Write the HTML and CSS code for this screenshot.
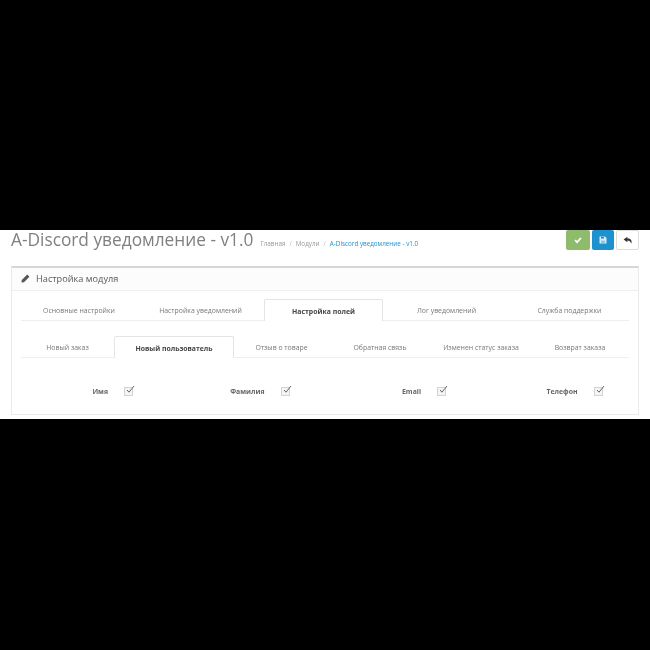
FILE: index.html
```html
<!DOCTYPE html>
<html lang="en">
<head>
    <meta charset="UTF-8">
    <title>A-Discord</title>
    <link rel="stylesheet" href="styles.css">
</head>
<body>
    <div class="band-top"></div>

    <div id="content">
        <!-- Page header -->
        <div class="page-header">
            <h1>A-Discord уведомление - v1.0</h1>
            <ul class="breadcrumb">
                <li>Главная</li>
                <li class="sep">/</li>
                <li>Модули</li>
                <li class="sep">/</li>
                <li class="current">A-Discord уведомление - v1.0</li>
            </ul>
            <div class="buttons">
                <a class="btn btn-success">
                    <svg width="8" height="8" viewBox="0 0 8 8"><path d="M1 4.2 3.1 6.2 7 2" fill="none" stroke="#fff" stroke-width="1.7"/></svg>
                </a>
                <a class="btn btn-primary">
                    <svg width="8" height="8" viewBox="0 0 8 8"><path d="M0.5 0.5H6L7.5 2V7.5H0.5Z" fill="#dcecf7"/><path d="M2 0.8H5V2.6H2Z" fill="#1e91cf"/><path d="M2 4.6H6V7H2Z" fill="#8fc6e6"/></svg>
                </a>
                <a class="btn btn-default">
                    <svg width="10" height="9" viewBox="0 0 10 9"><path d="M4.4 0.8 0.6 3.6 4.4 6.2V4.5C6.4 4.5 7.6 5.2 8.2 7.8 9.4 4.6 7.8 2.6 4.4 2.6Z" fill="#333"/></svg>
                </a>
            </div>
        </div>

        <!-- Settings panel -->
        <div class="panel">
            <div class="panel-heading">
                <svg class="pencil" width="9" height="9" viewBox="0 0 9 9"><path d="M6.2 0.6 8.4 2.8 3 8.2 0.4 8.6 0.8 6Z" fill="#555"/></svg>
                <h3>Настройка модуля</h3>
            </div>
            <div class="panel-body">
                <ul class="tabs tabs-main">
                    <li>Основные настройки</li>
                    <li>Настройка уведомлений</li>
                    <li class="active">Настройка полей</li>
                    <li>Лог уведомлений</li>
                    <li>Служба поддержки</li>
                </ul>
                <ul class="tabs tabs-sub">
                    <li>Новый заказ</li>
                    <li class="active">Новый пользователь</li>
                    <li>Отзыв о товаре</li>
                    <li>Обратная связь</li>
                    <li>Изменен статус заказа</li>
                    <li>Возврат заказа</li>
                </ul>
                <div class="fields">
                    <div class="field"><label>Имя</label><span class="check"><svg width="10" height="10" viewBox="0 0 10 10"><path d="M2 5 4 7.2 9 1" fill="none" stroke="#666" stroke-width="1"/></svg></span></div>
                    <div class="field"><label>Фамилия</label><span class="check"><svg width="10" height="10" viewBox="0 0 10 10"><path d="M2 5 4 7.2 9 1" fill="none" stroke="#666" stroke-width="1"/></svg></span></div>
                    <div class="field"><label>Email</label><span class="check"><svg width="10" height="10" viewBox="0 0 10 10"><path d="M2 5 4 7.2 9 1" fill="none" stroke="#666" stroke-width="1"/></svg></span></div>
                    <div class="field"><label>Телефон</label><span class="check"><svg width="10" height="10" viewBox="0 0 10 10"><path d="M2 5 4 7.2 9 1" fill="none" stroke="#666" stroke-width="1"/></svg></span></div>
                </div>
            </div>
        </div>
    </div>

    <div class="band-bottom"></div>
</body>
</html>
```

FILE: styles.css
```css
/* General Styles */
html, body {
    margin: 0;
    padding: 0;
    height: 650px;
    overflow: hidden;
    background-color: #000;
    font-family: "Open Sans", sans-serif;
}

.band-top {
    height: 230px;
}

.band-bottom {
    height: 231px;
}

#content {
    height: 189px;
    background-color: #fff;
    padding: 0 11px;
    box-sizing: border-box;
}

/* Page header */
.page-header {
    display: flex;
    align-items: flex-start;
    height: 36px;
    filter: blur(0.35px);
}

.page-header h1 {
    margin: 0 7px 0 0;
    font-size: 17.3px;
    font-weight: 400;
    line-height: 20px;
    color: #808080;
}

.breadcrumb {
    display: flex;
    gap: 4px;
    margin: 9px 0 0 0;
    padding: 0;
    list-style: none;
    font-size: 6.3px;
    line-height: 9px;
    color: #999;
}

.breadcrumb .sep {
    color: #bbb;
}

.breadcrumb .current {
    color: #1e91cf;
}

.buttons {
    display: flex;
    gap: 2px;
    margin-left: auto;
}

.btn {
    display: flex;
    align-items: center;
    justify-content: center;
    width: 22px;
    height: 20px;
    border-radius: 2px;
    box-sizing: border-box;
}

.btn-success {
    width: 24px;
    background-color: #8fbb6c;
}

.btn-primary {
    background-color: #1e91cf;
}

.btn-default {
    width: 23px;
    background-color: #fff;
    border: 1px solid #ddd;
}

/* Panel */
.panel {
    height: 149px;
    border: 1px solid #eaeaea;
    border-top: 2px solid #d6d6d6;
    border-radius: 1px;
    box-sizing: border-box;
    filter: blur(0.35px);
}

.panel-heading {
    display: flex;
    align-items: center;
    gap: 6px;
    height: 23px;
    padding: 0 0 2px 9px;
    background-color: #fcfcfc;
    border-bottom: 1px solid #eee;
    box-sizing: border-box;
}

.panel-heading h3 {
    margin: 0;
    font-size: 9.2px;
    font-weight: 400;
    color: #595959;
}

.panel-body {
    padding-top: 8px;
}

/* Tabs */
.tabs {
    display: grid;
    margin: 0 9px;
    padding: 0;
    list-style: none;
    height: 22px;
    border-bottom: 1px solid #eee;
    box-sizing: border-box;
    font-size: 6.9px;
    color: #777;
}

.tabs-main {
    grid-template-columns: 116fr 127fr 119fr 127fr 119fr;
}

.tabs-sub {
    grid-template-columns: 93fr 120fr 95fr 102fr 100fr 98fr;
    margin-top: 15px;
}

.tabs li {
    display: flex;
    align-items: center;
    justify-content: center;
    height: 21px;
    padding-top: 1px;
    box-sizing: border-box;
}

.tabs li.active {
    height: 22px;
    background-color: #fff;
    border: 1px solid #e4e4e4;
    border-bottom: 0;
    border-radius: 2px 2px 0 0;
    font-weight: 700;
    color: #444;
}

/* Fields */
.fields {
    display: grid;
    grid-template-columns: repeat(4, 1fr);
    margin-top: 29px;
}

.field {
    display: grid;
    grid-template-columns: 96px 1fr;
    column-gap: 16px;
    align-items: center;
}

.field label {
    text-align: right;
    font-size: 6.9px;
    font-weight: 700;
    color: #666;
}

.check {
    position: relative;
    display: block;
    width: 7px;
    height: 7px;
    border: 1px solid #d4d4d4;
    background-color: #f5f5f5;
}

.check svg {
    position: absolute;
    left: 0;
    top: -3px;
}
```
